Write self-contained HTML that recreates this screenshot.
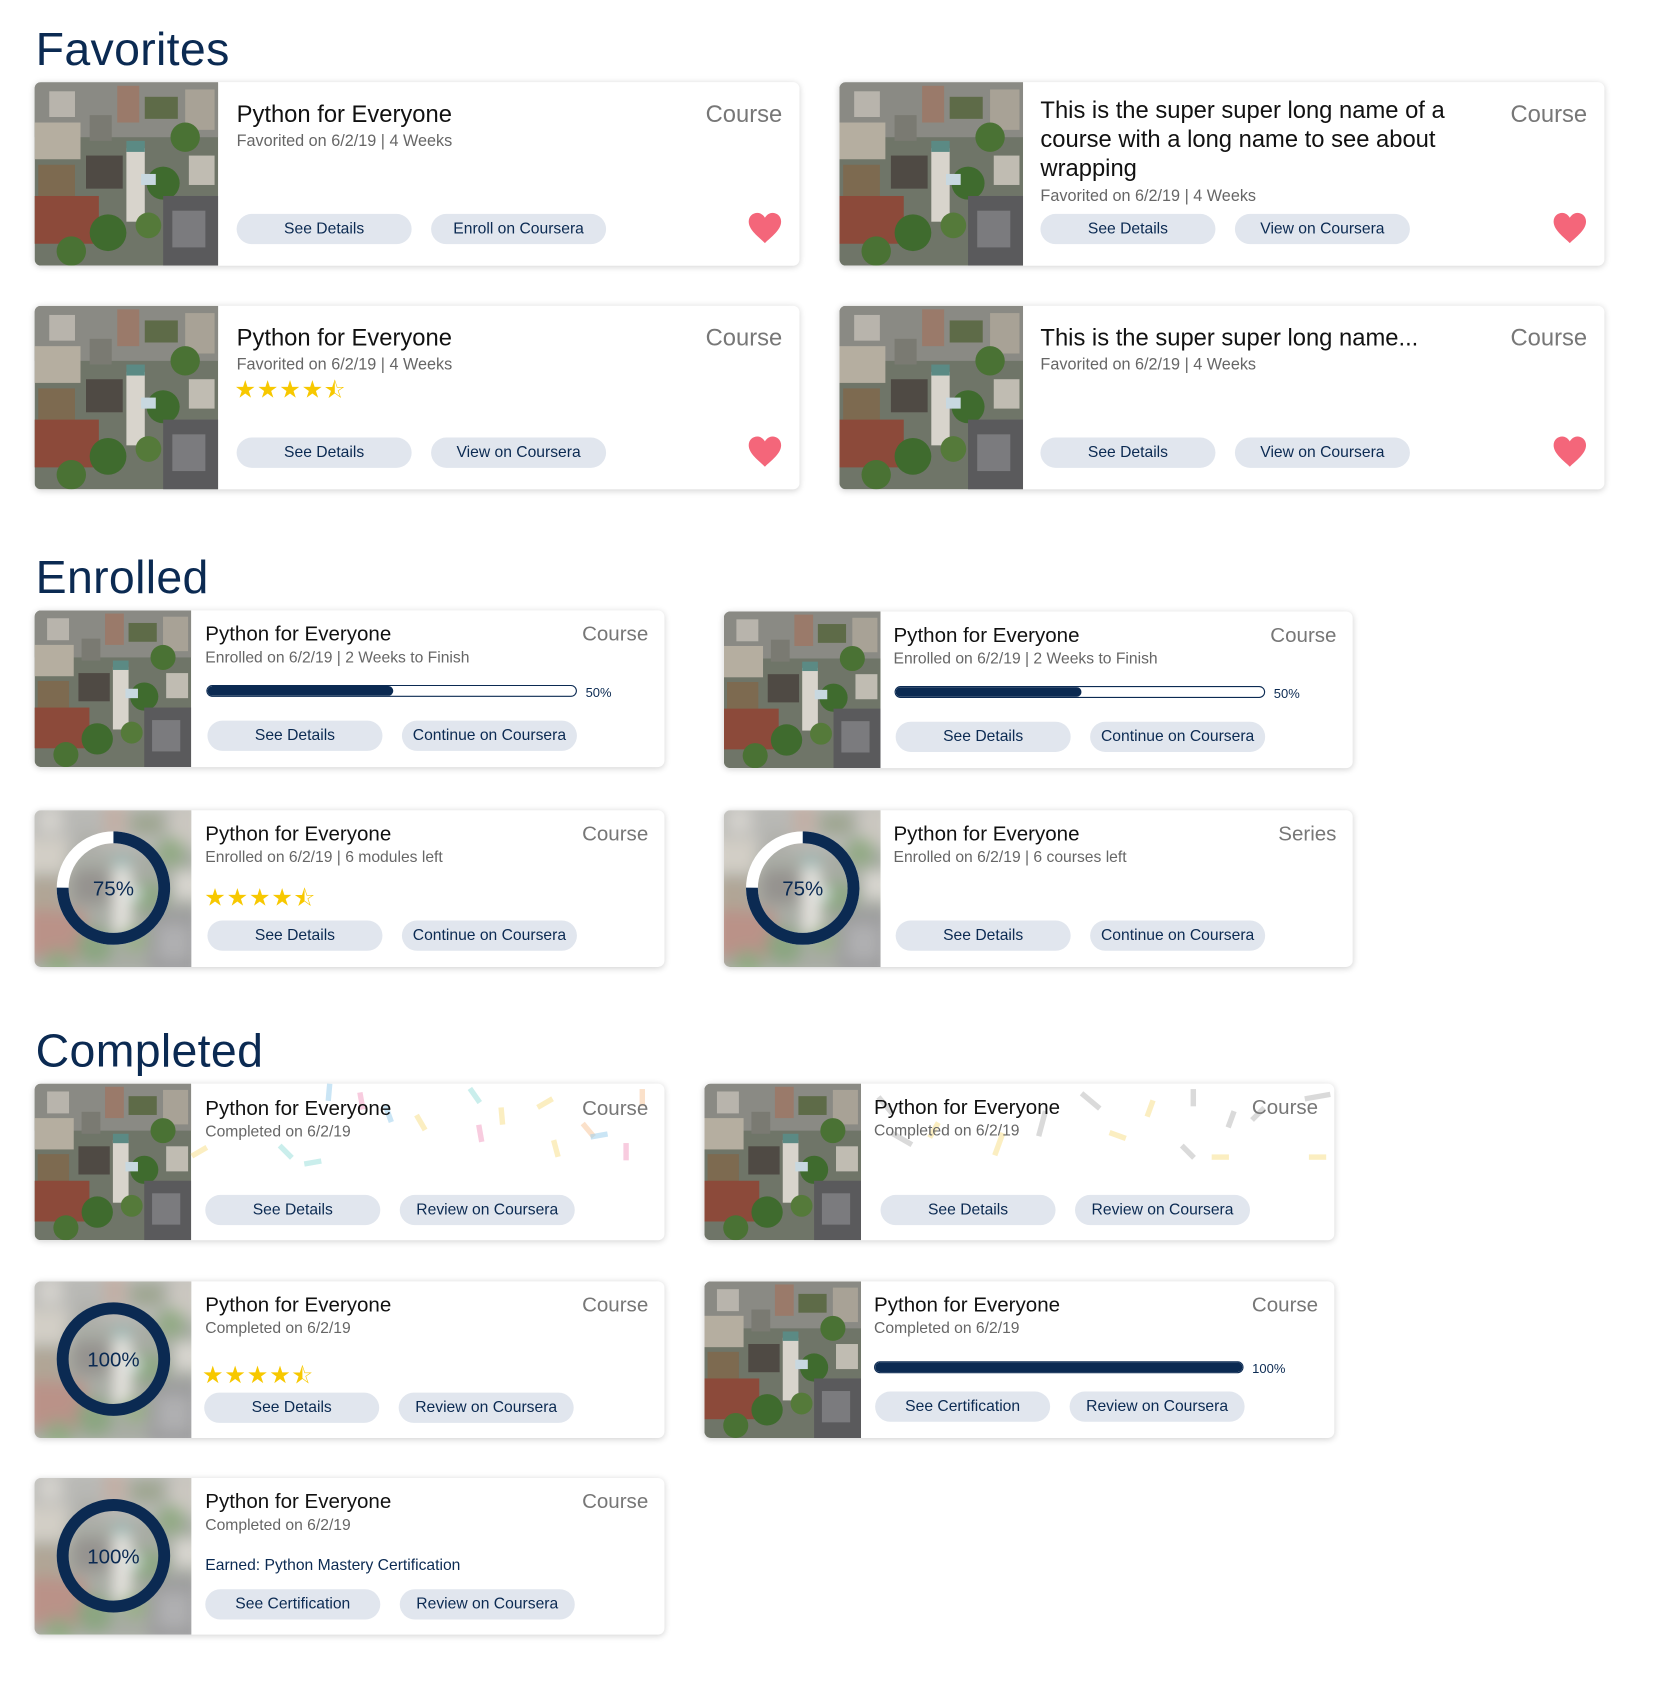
<!DOCTYPE html>
<html><head><meta charset="utf-8">
<style>
html,body{margin:0;padding:0;background:#fff;width:1667px;height:1695px;overflow:hidden}
#s{position:absolute;left:0;top:0;width:1543px;height:1569px;transform:scale(1.0804);transform-origin:0 0;font-family:"Liberation Sans",sans-serif}
h1{position:absolute;margin:0;font-weight:normal;color:#0b2a52;font-size:43px;left:33px;letter-spacing:0.3px}
.card{position:absolute;background:#fff;border-radius:6px;box-shadow:0 1px 6px rgba(0,0,0,.18);overflow:hidden}
.ph{position:absolute;left:0;top:0;height:100%}
.ph svg{width:100%;height:100%;display:block}
.blur svg{filter:blur(6px);transform:scale(1.15)}
.blur::after{content:"";position:absolute;inset:0;background:rgba(255,255,255,.4)}
.t{position:absolute;color:#111;white-space:nowrap}
.sub{position:absolute;color:#666;white-space:nowrap}
.ty{position:absolute;color:#777;white-space:nowrap}
.btn{position:absolute;background:#e1e6ee;border-radius:14px;height:28px;line-height:28px;width:162px;text-align:center;color:#0b2a52;font-size:14.5px;white-space:nowrap}
.heart{position:absolute;width:32px;height:30px}
.stars{position:absolute;color:#f7c800;font-size:22px;letter-spacing:1px;white-space:nowrap}
.bar{position:absolute;height:9px;border:1.5px solid #0b2a52;border-radius:7px;overflow:hidden}
.bar i{display:block;height:100%;background:#0b2a52;border-radius:6px}
.pct{position:absolute;font-size:12px;color:#0b2a52}
.ring{position:absolute}
.cf{position:absolute;width:5px;height:16px;opacity:.55}
</style></head><body>
<svg width="0" height="0" style="position:absolute">
<defs>
<symbol id="campus" viewBox="0 0 100 100" preserveAspectRatio="none">
<rect width="100" height="100" fill="#6f7568"/>
<rect x="0" y="0" width="100" height="30" fill="#8a8a84"/>
<rect x="8" y="5" width="14" height="14" fill="#b8b4ac"/>
<rect x="45" y="2" width="12" height="20" fill="#9a7a6a"/>
<rect x="60" y="8" width="18" height="12" fill="#5e6b48"/>
<rect x="82" y="4" width="16" height="22" fill="#a8a296"/>
<rect x="0" y="22" width="25" height="20" fill="#b5aea0"/>
<rect x="2" y="45" width="20" height="18" fill="#7d6a50"/>
<rect x="0" y="62" width="35" height="26" fill="#8c4a3a"/>
<rect x="28" y="40" width="20" height="18" fill="#4f4a44"/>
<rect x="50" y="36" width="10" height="40" fill="#d8d4cc"/>
<rect x="50" y="32" width="10" height="6" fill="#5b8a84"/>
<circle cx="70" cy="55" r="9" fill="#3f6b2e"/>
<circle cx="40" cy="82" r="10" fill="#3f6b2e"/>
<circle cx="82" cy="30" r="8" fill="#4a7234"/>
<circle cx="20" cy="92" r="8" fill="#4a7234"/>
<circle cx="62" cy="78" r="7" fill="#557a3a"/>
<rect x="70" y="62" width="30" height="38" fill="#5a5a5c"/>
<rect x="75" y="70" width="18" height="20" fill="#7b7b7e"/>
<rect x="30" y="18" width="12" height="14" fill="#7a7a72"/>
<rect x="84" y="40" width="14" height="16" fill="#c0bcb2"/>
<rect x="58" y="50" width="8" height="6" fill="#c8d8e0"/>
</symbol>
<symbol id="heart" viewBox="0 0 32 30"><path d="M16 29 C10 23 1 17 1 9 C1 4 5 1 9 1 C12 1 14.5 3 16 5.5 C17.5 3 20 1 23 1 C27 1 31 4 31 9 C31 17 22 23 16 29 Z" fill="#f4667a"/></symbol>
</defs></svg>
<div id="s">

<h1 style="top:22px">Favorites</h1>

<div class="card" style="left:32px;top:76px;width:708px;height:170px">
<div class="ph" style="width:170px"><svg><use href="#campus"/></svg></div>
<div class="t" style="left:187px;top:17px;font-size:22px">Python for Everyone</div>
<div class="ty" style="right:16px;top:17px;font-size:22px">Course</div>
<div class="sub" style="left:187px;top:46px;font-size:15px">Favorited on 6/2/19 | 4 Weeks</div>
<div class="btn" style="left:187px;top:122px">See Details</div>
<div class="btn" style="left:367px;top:122px">Enroll on Coursera</div>
<svg class="heart" style="left:660px;top:120px"><use href="#heart"/></svg>
</div>
<div class="card" style="left:777px;top:76px;width:708px;height:170px">
<div class="ph" style="width:170px"><svg><use href="#campus"/></svg></div>
<div class="t" style="left:186px;top:12px;font-size:22px;line-height:27px;white-space:normal;width:410px">This is the super super long name of a course with a long name to see about wrapping</div>
<div class="ty" style="right:16px;top:17px;font-size:22px">Course</div>
<div class="sub" style="left:186px;top:97px;font-size:15px">Favorited on 6/2/19 | 4 Weeks</div>
<div class="btn" style="left:186px;top:122px">See Details</div>
<div class="btn" style="left:366px;top:122px">View on Coursera</div>
<svg class="heart" style="left:660px;top:120px"><use href="#heart"/></svg>
</div>

<div class="card" style="left:32px;top:283px;width:708px;height:170px">
<div class="ph" style="width:170px"><svg><use href="#campus"/></svg></div>
<div class="t" style="left:187px;top:17px;font-size:22px">Python for Everyone</div>
<div class="ty" style="right:16px;top:17px;font-size:22px">Course</div>
<div class="sub" style="left:187px;top:46px;font-size:15px">Favorited on 6/2/19 | 4 Weeks</div>
<div class="stars" style="left:185px;top:64px">★★★★<span style="font-size:21px">⯪</span></div>
<div class="btn" style="left:187px;top:122px">See Details</div>
<div class="btn" style="left:367px;top:122px">View on Coursera</div>
<svg class="heart" style="left:660px;top:120px"><use href="#heart"/></svg>
</div>
<div class="card" style="left:777px;top:283px;width:708px;height:170px">
<div class="ph" style="width:170px"><svg><use href="#campus"/></svg></div>
<div class="t" style="left:186px;top:17px;font-size:22px">This is the super super long name...</div>
<div class="ty" style="right:16px;top:17px;font-size:22px">Course</div>
<div class="sub" style="left:186px;top:46px;font-size:15px">Favorited on 6/2/19 | 4 Weeks</div>
<div class="btn" style="left:186px;top:122px">See Details</div>
<div class="btn" style="left:366px;top:122px">View on Coursera</div>
<svg class="heart" style="left:660px;top:120px"><use href="#heart"/></svg>
</div>

<h1 style="top:511px">Enrolled</h1>

<div class="card" style="left:32px;top:565px;width:583px;height:145px">
<div class="ph" style="width:145px"><svg><use href="#campus"/></svg></div>
<div class="t" style="left:158px;top:12px;font-size:19px">Python for Everyone</div>
<div class="ty" style="right:15px;top:12px;font-size:19px">Course</div>
<div class="sub" style="left:158px;top:36px;font-size:14.5px">Enrolled on 6/2/19 | 2 Weeks to Finish</div>
<div class="bar" style="left:159px;top:69px;width:341px"><i style="width:172px"></i></div>
<div class="pct" style="left:510px;top:69px">50%</div>
<div class="btn" style="left:160px;top:102px">See Details</div>
<div class="btn" style="left:340px;top:102px">Continue on Coursera</div>
</div>
<div class="card" style="left:670px;top:566px;width:582px;height:145px">
<div class="ph" style="width:145px"><svg><use href="#campus"/></svg></div>
<div class="t" style="left:157px;top:12px;font-size:19px">Python for Everyone</div>
<div class="ty" style="right:15px;top:12px;font-size:19px">Course</div>
<div class="sub" style="left:157px;top:36px;font-size:14.5px">Enrolled on 6/2/19 | 2 Weeks to Finish</div>
<div class="bar" style="left:158px;top:69px;width:341px"><i style="width:172px"></i></div>
<div class="pct" style="left:509px;top:69px">50%</div>
<div class="btn" style="left:159px;top:102px">See Details</div>
<div class="btn" style="left:339px;top:102px">Continue on Coursera</div>
</div>

<div class="card" style="left:32px;top:750px;width:583px;height:145px">
<div class="ph blur" style="width:145px;overflow:hidden"><svg><use href="#campus"/></svg></div>
<svg class="ring" style="left:20px;top:19px" width="106" height="106"><circle cx="53" cy="53" r="47" fill="none" stroke="#fff" stroke-width="11"/><circle cx="53" cy="53" r="47" fill="none" stroke="#0b2a52" stroke-width="11" stroke-dasharray="221.5 300" transform="rotate(-90 53 53)"/><text x="53" y="60" text-anchor="middle" font-family="Liberation Sans" font-size="19" fill="#0b2a52">75%</text></svg>
<div class="t" style="left:158px;top:12px;font-size:19px">Python for Everyone</div>
<div class="ty" style="right:15px;top:12px;font-size:19px">Course</div>
<div class="sub" style="left:158px;top:36px;font-size:14.5px">Enrolled on 6/2/19 | 6 modules left</div>
<div class="stars" style="left:157px;top:67px">★★★★<span style="font-size:21px">⯪</span></div>
<div class="btn" style="left:160px;top:102px">See Details</div>
<div class="btn" style="left:340px;top:102px">Continue on Coursera</div>
</div>
<div class="card" style="left:670px;top:750px;width:582px;height:145px">
<div class="ph blur" style="width:145px;overflow:hidden"><svg><use href="#campus"/></svg></div>
<svg class="ring" style="left:20px;top:19px" width="106" height="106"><circle cx="53" cy="53" r="47" fill="none" stroke="#fff" stroke-width="11"/><circle cx="53" cy="53" r="47" fill="none" stroke="#0b2a52" stroke-width="11" stroke-dasharray="221.5 300" transform="rotate(-90 53 53)"/><text x="53" y="60" text-anchor="middle" font-family="Liberation Sans" font-size="19" fill="#0b2a52">75%</text></svg>
<div class="t" style="left:157px;top:12px;font-size:19px">Python for Everyone</div>
<div class="ty" style="right:15px;top:12px;font-size:19px">Series</div>
<div class="sub" style="left:157px;top:36px;font-size:14.5px">Enrolled on 6/2/19 | 6 courses left</div>
<div class="btn" style="left:159px;top:102px">See Details</div>
<div class="btn" style="left:339px;top:102px">Continue on Coursera</div>
</div>

<h1 style="top:949px">Completed</h1>

<div class="card" style="left:32px;top:1003px;width:583px;height:145px">
<div class="ph" style="width:145px"><svg><use href="#campus"/></svg></div>
<div class="cf" style="left:270px;top:0;background:#9fd0ec;transform:rotate(5deg)"></div>
<div class="cf" style="left:300px;top:8px;background:#f3a3c4;transform:rotate(-10deg)"></div>
<div class="cf" style="left:325px;top:20px;background:#9fd0ec;transform:rotate(-20deg)"></div>
<div class="cf" style="left:355px;top:28px;background:#f7e08e;transform:rotate(-30deg)"></div>
<div class="cf" style="left:405px;top:3px;background:#9ee0dc;transform:rotate(-35deg)"></div>
<div class="cf" style="left:410px;top:38px;background:#f3a3c4;transform:rotate(-10deg)"></div>
<div class="cf" style="left:430px;top:22px;background:#f7e08e;transform:rotate(-5deg)"></div>
<div class="cf" style="left:470px;top:10px;background:#f7e08e;transform:rotate(60deg)"></div>
<div class="cf" style="left:480px;top:52px;background:#f7e08e;transform:rotate(-15deg)"></div>
<div class="cf" style="left:510px;top:35px;background:#f7c89e;transform:rotate(-40deg)"></div>
<div class="cf" style="left:520px;top:40px;background:#9fd0ec;transform:rotate(80deg)"></div>
<div class="cf" style="left:545px;top:55px;background:#f3a3c4"></div>
<div class="cf" style="left:560px;top:5px;background:#f7c89e"></div>
<div class="cf" style="left:230px;top:55px;background:#9ee0dc;transform:rotate(-45deg)"></div>
<div class="cf" style="left:255px;top:65px;background:#9ee0dc;transform:rotate(80deg)"></div>
<div class="cf" style="left:150px;top:55px;background:#f7e08e;transform:rotate(60deg)"></div>
<div class="t" style="left:158px;top:13px;font-size:19px">Python for Everyone</div>
<div class="ty" style="right:15px;top:13px;font-size:19px">Course</div>
<div class="sub" style="left:158px;top:37px;font-size:14.5px">Completed on 6/2/19</div>
<div class="btn" style="left:158px;top:103px">See Details</div>
<div class="btn" style="left:338px;top:103px">Review on Coursera</div>
</div>
<div class="card" style="left:652px;top:1003px;width:583px;height:145px">
<div class="ph" style="width:145px"><svg><use href="#campus"/></svg></div>
<div class="cf" style="left:165px;top:10px;background:#bbb;transform:rotate(-40deg);height:20px"></div>
<div class="cf" style="left:180px;top:40px;background:#bbb;transform:rotate(-60deg);height:22px"></div>
<div class="cf" style="left:210px;top:35px;background:#f7e08e;transform:rotate(30deg)"></div>
<div class="cf" style="left:270px;top:45px;background:#f7e08e;transform:rotate(20deg);height:22px"></div>
<div class="cf" style="left:310px;top:25px;background:#bbb;transform:rotate(15deg);height:24px"></div>
<div class="cf" style="left:355px;top:5px;background:#bbb;transform:rotate(-50deg);height:22px"></div>
<div class="cf" style="left:380px;top:40px;background:#f7e08e;transform:rotate(-70deg)"></div>
<div class="cf" style="left:410px;top:15px;background:#f7e08e;transform:rotate(20deg)"></div>
<div class="cf" style="left:450px;top:5px;background:#bbb"></div>
<div class="cf" style="left:445px;top:55px;background:#bbb;transform:rotate(-45deg)"></div>
<div class="cf" style="left:485px;top:25px;background:#bbb;transform:rotate(20deg)"></div>
<div class="cf" style="left:510px;top:20px;background:#bbb;transform:rotate(45deg)"></div>
<div class="cf" style="left:475px;top:60px;background:#f7e08e;transform:rotate(90deg)"></div>
<div class="cf" style="left:565px;top:0;background:#bbb;transform:rotate(80deg);height:24px"></div>
<div class="cf" style="left:565px;top:60px;background:#f7e08e;transform:rotate(90deg)"></div>
<div class="t" style="left:157px;top:12px;font-size:19px">Python for Everyone</div>
<div class="ty" style="right:15px;top:12px;font-size:19px">Course</div>
<div class="sub" style="left:157px;top:36px;font-size:14.5px">Completed on 6/2/19</div>
<div class="btn" style="left:163px;top:103px">See Details</div>
<div class="btn" style="left:343px;top:103px">Review on Coursera</div>
</div>

<div class="card" style="left:32px;top:1186px;width:583px;height:145px">
<div class="ph blur" style="width:145px;overflow:hidden"><svg><use href="#campus"/></svg></div>
<svg class="ring" style="left:20px;top:19px" width="106" height="106"><circle cx="53" cy="53" r="47" fill="none" stroke="#0b2a52" stroke-width="11"/><text x="53" y="60" text-anchor="middle" font-family="Liberation Sans" font-size="19" fill="#0b2a52">100%</text></svg>
<div class="t" style="left:158px;top:12px;font-size:19px">Python for Everyone</div>
<div class="ty" style="right:15px;top:12px;font-size:19px">Course</div>
<div class="sub" style="left:158px;top:36px;font-size:14.5px">Completed on 6/2/19</div>
<div class="stars" style="left:155px;top:73px">★★★★<span style="font-size:21px">⯪</span></div>
<div class="btn" style="left:157px;top:103px">See Details</div>
<div class="btn" style="left:337px;top:103px">Review on Coursera</div>
</div>
<div class="card" style="left:652px;top:1186px;width:583px;height:145px">
<div class="ph" style="width:145px"><svg><use href="#campus"/></svg></div>
<div class="t" style="left:157px;top:12px;font-size:19px">Python for Everyone</div>
<div class="ty" style="right:15px;top:12px;font-size:19px">Course</div>
<div class="sub" style="left:157px;top:36px;font-size:14.5px">Completed on 6/2/19</div>
<div class="bar" style="left:157px;top:74px;width:340px"><i style="width:100%"></i></div>
<div class="pct" style="left:507px;top:74px">100%</div>
<div class="btn" style="left:158px;top:102px">See Certification</div>
<div class="btn" style="left:338px;top:102px">Review on Coursera</div>
</div>

<div class="card" style="left:32px;top:1368px;width:583px;height:145px">
<div class="ph blur" style="width:145px;overflow:hidden"><svg><use href="#campus"/></svg></div>
<svg class="ring" style="left:20px;top:19px" width="106" height="106"><circle cx="53" cy="53" r="47" fill="none" stroke="#0b2a52" stroke-width="11"/><text x="53" y="60" text-anchor="middle" font-family="Liberation Sans" font-size="19" fill="#0b2a52">100%</text></svg>
<div class="t" style="left:158px;top:12px;font-size:19px">Python for Everyone</div>
<div class="ty" style="right:15px;top:12px;font-size:19px">Course</div>
<div class="sub" style="left:158px;top:36px;font-size:14.5px">Completed on 6/2/19</div>
<div class="sub" style="left:158px;top:73px;font-size:14.5px;color:#0b2a52">Earned: Python Mastery Certification</div>
<div class="btn" style="left:158px;top:103px">See Certification</div>
<div class="btn" style="left:338px;top:103px">Review on Coursera</div>
</div>

</div>
</body></html>
